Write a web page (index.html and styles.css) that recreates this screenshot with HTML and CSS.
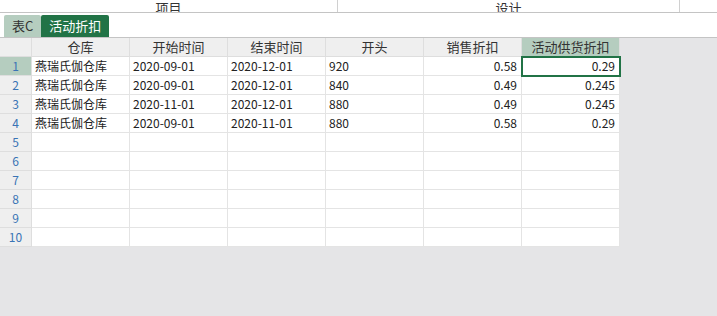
FILE: index.html
```html
<!DOCTYPE html>
<html lang="zh-CN">
<head>
    <meta charset="UTF-8">
    <meta name="viewport" content="width=device-width, initial-scale=1.0">
    <title>活动折扣</title>
    <link rel="stylesheet" href="styles.css">
</head>
<body>
    <div class="top-header">
        <div class="group group-a"><span>项目</span></div>
        <div class="group group-b"><span>设计</span></div>
        <div class="group group-rest"></div>
    </div>

    <div class="tabs">
        <div class="tab">表C</div>
        <div class="tab active">活动折扣</div>
    </div>

    <div class="sheet">
        <table class="grid">
            <thead>
                <tr>
                    <th class="corner"></th>
                    <th>仓库</th>
                    <th>开始时间</th>
                    <th>结束时间</th>
                    <th>开头</th>
                    <th>销售折扣</th>
                    <th class="sel">活动供货折扣</th>
                </tr>
            </thead>
            <tbody>
                <tr>
                    <td class="num sel">1</td>
                    <td>燕瑞氏伽仓库</td>
                    <td>2020-09-01</td>
                    <td>2020-12-01</td>
                    <td>920</td>
                    <td class="right">0.58</td>
                    <td class="right current">0.29</td>
                </tr>
                <tr>
                    <td class="num">2</td>
                    <td>燕瑞氏伽仓库</td>
                    <td>2020-09-01</td>
                    <td>2020-12-01</td>
                    <td>840</td>
                    <td class="right">0.49</td>
                    <td class="right">0.245</td>
                </tr>
                <tr>
                    <td class="num">3</td>
                    <td>燕瑞氏伽仓库</td>
                    <td>2020-11-01</td>
                    <td>2020-12-01</td>
                    <td>880</td>
                    <td class="right">0.49</td>
                    <td class="right">0.245</td>
                </tr>
                <tr>
                    <td class="num">4</td>
                    <td>燕瑞氏伽仓库</td>
                    <td>2020-09-01</td>
                    <td>2020-11-01</td>
                    <td>880</td>
                    <td class="right">0.58</td>
                    <td class="right">0.29</td>
                </tr>
                <tr><td class="num">5</td><td></td><td></td><td></td><td></td><td></td><td></td></tr>
                <tr><td class="num">6</td><td></td><td></td><td></td><td></td><td></td><td></td></tr>
                <tr><td class="num">7</td><td></td><td></td><td></td><td></td><td></td><td></td></tr>
                <tr><td class="num">8</td><td></td><td></td><td></td><td></td><td></td><td></td></tr>
                <tr><td class="num">9</td><td></td><td></td><td></td><td></td><td></td><td></td></tr>
                <tr><td class="num">10</td><td></td><td></td><td></td><td></td><td></td><td></td></tr>
            </tbody>
        </table>
    </div>
</body>
</html>
```

FILE: styles.css
```css
body {
    margin: 0;
    font-family: "Noto Sans CJK SC", "Liberation Sans", sans-serif;
    font-size: 12px;
    color: #222;
    background: #e5e5e7; /* empty sheet area */
    height: 316px;
    overflow: hidden;
}

/* clipped column-group header at the very top */
.top-header {
    display: flex;
    height: 12px;
    background: #fff;
    border-bottom: 1px solid #c4c4c4;
    overflow: hidden;
}
.top-header .group {
    display: flex;
    justify-content: center;
    align-items: flex-end;
    border-right: 1px solid #d0d0d0;
    box-sizing: border-box;
}
.top-header .group span {
    font-size: 13px;
    line-height: 13px;
    margin-bottom: -2px;
    color: #333;
}
.group-a { width: 338px; }
.group-b { width: 342px; }
.group-rest { flex: 1; border-right: none !important; }

/* sheet tabs */
.tabs {
    display: flex;
    align-items: flex-end;
    height: 24px;
    padding-left: 4px;
    background: #fff;
    border-bottom: 1px solid #c4c4c4;
}
.tab {
    height: 22px;
    line-height: 22px;
    padding: 0 8px;
    background: #b5cdbf;
    color: #333;
    font-size: 13px;
    border-radius: 2px 2px 0 0;
}
.tab.active {
    background: #217346;
    color: #fff;
    width: 52px;
}

/* grid */
.grid {
    border-collapse: separate;
    border-spacing: 0;
    background: #fff;
    table-layout: fixed;
}
.grid th,
.grid td {
    width: 98px;
    height: 19px;
    padding: 0 3px;
    box-sizing: border-box;
    border-right: 1px solid #e4e4e4;
    border-bottom: 1px solid #e4e4e4;
    font-weight: normal;
    white-space: nowrap;
    line-height: 18px;
}
.grid th {
    background: #efefef;
    border-color: #dedede;
    text-align: center;
    font-size: 13px;
    color: #333;
}
.grid th.corner,
.grid td.num {
    width: 32px;
    min-width: 32px;
}
.grid td.num {
    background: #efefef;
    border-color: #dedede;
    color: #3a74b5;
    text-align: center;
    font-size: 12px;
}
.grid th.sel,
.grid td.num.sel {
    background: #b5cdbf;
}
.grid td.right {
    text-align: right;
    padding-right: 4px;
}
.grid td.current {
    outline: 2px solid #217346;
    outline-offset: -1px;
}
```
